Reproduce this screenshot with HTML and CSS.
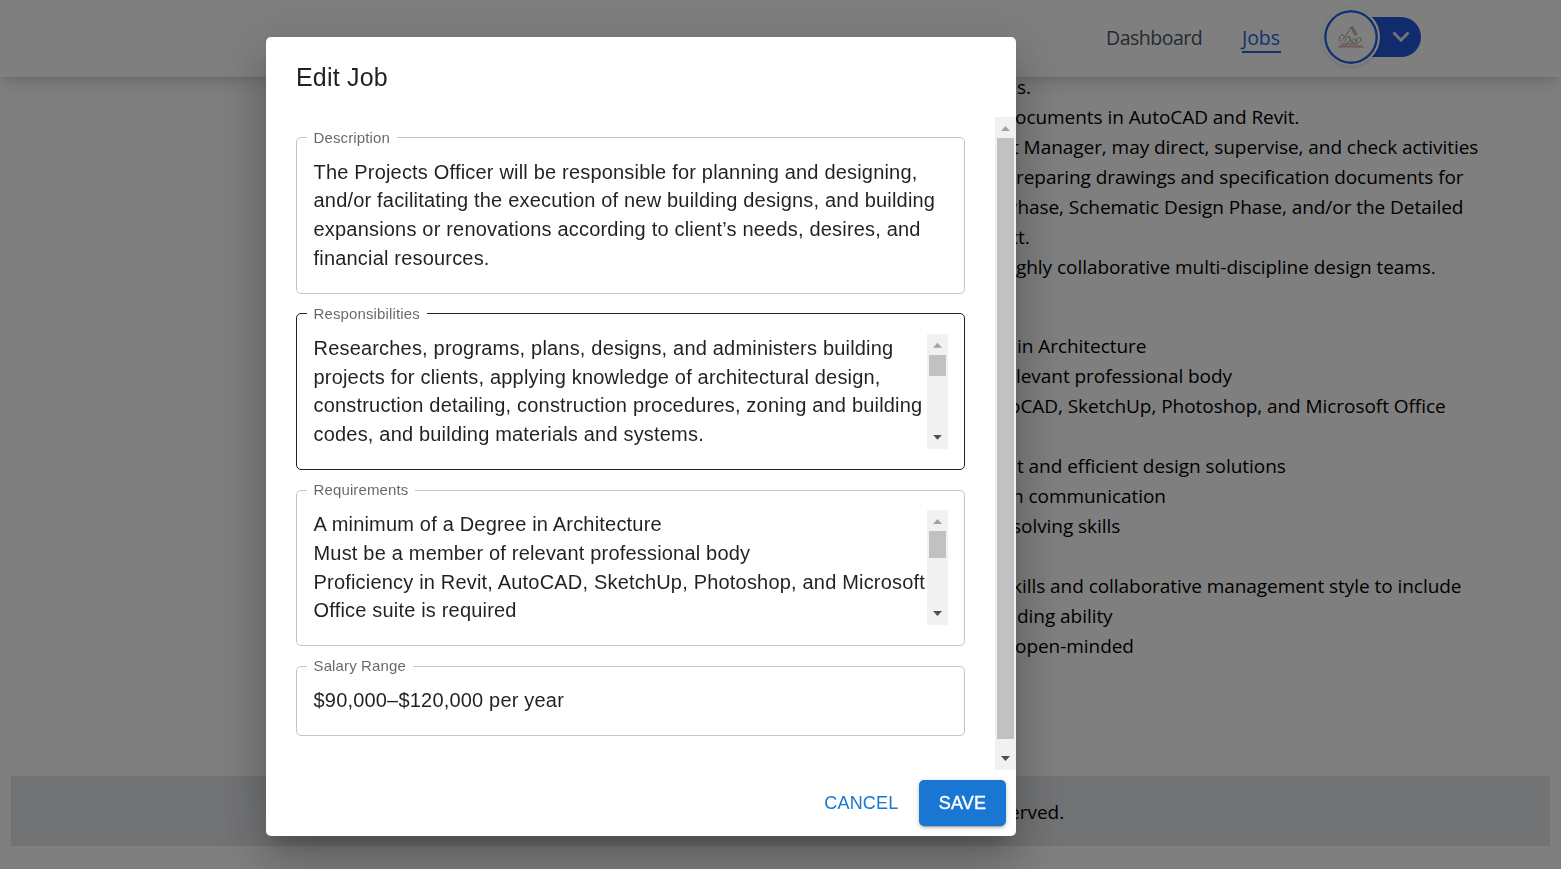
FILE: index.html
```html
<!DOCTYPE html>
<html lang="en">
<head>
<meta charset="utf-8">
<title>Edit Job</title>
<link rel="stylesheet" href="styles.css">
</head>
<body>
<div class="page">
  <header class="topbar">
    <nav class="nav">
      <a class="nav-link">Dashboard</a>
      <a class="nav-link active">Jobs</a>
    </nav>
    <div class="account">
      <div class="avatar">
        <svg width="28" height="26" viewBox="0 0 28 26" fill="none">
          <path d="M14 3L16 2L21 11L18.500 11ZM2 21.500H24.500L21 18.500L27 23.500H1Z" fill="#f0a3a3"/>
          <path d="M3 18c-2-3 0-8 3-7s0 5-2 6M8 13l6-10 4 9M8 18c0-4 4-7 5-4s-3 5-4 7M12 12l3 7M15 18c0-4 4-3 4-1s-3 3-4 1M19 17c1-5 6-4 5-1s-4 3-5 1M4 20h17" stroke="#999" stroke-width=".9"/>
        </svg>
      </div>
      <div class="pill">
        <svg width="18" height="12" viewBox="0 0 18 12" fill="none"><path d="M1.500 1.500L9 9.200L16.500 1.500" stroke="#e5e7eb" stroke-width="3"/></svg>
      </div>
    </div>
  </header>
  <main class="content">
    <div class="lines">
      <p>s.</p>
      <p class="in2">ocuments in AutoCAD and Revit.</p>
      <p class="in4">t Manager, may direct, supervise, and check activities</p>
      <p class="in1">reparing drawings and specification documents for</p>
      <p class="in12">Phase, Schematic Design Phase, and/or the Detailed</p>
      <p class="in8">ct.</p>
      <p class="in1">ghly collaborative multi-discipline design teams.</p>
    </div>
    <div class="lines second">
      <p>in Architecture</p>
      <p class="in1">levant professional body</p>
      <p class="in8">oCAD, SketchUp, Photoshop, and Microsoft Office</p>
      <p></p>
      <p>t and efficient design solutions</p>
      <p class="in4">n communication</p>
      <p class="in4">solving skills</p>
      <p></p>
      <p class="in4">kills and collaborative management style to include</p>
      <p>ding ability</p>
      <p class="in2">open-minded</p>
    </div>
  </main>
  <footer class="footer">erved.</footer>
</div>

<div class="backdrop">
  <section class="dialog">
    <h2 class="title">Edit Job</h2>
    <div class="body">
      <div class="fields">
        <fieldset class="field"><legend>Description</legend>
          <div class="text">The Projects Officer will be responsible for planning and designing,<br>and/or facilitating the execution of new building designs, and building<br>expansions or renovations according to client’s needs, desires, and<br>financial resources.</div>
        </fieldset>
        <fieldset class="field hover"><legend>Responsibilities</legend>
          <div class="text">Researches, programs, plans, designs, and administers building<br>projects for clients, applying knowledge of architectural design,<br>construction detailing, construction procedures, zoning and building<br>codes, and building materials and systems.</div>
          <div class="scroll"><i class="up"></i><b class="thumb"></b><i class="down"></i></div>
        </fieldset>
        <fieldset class="field"><legend>Requirements</legend>
          <div class="text">A minimum of a Degree in Architecture<br>Must be a member of relevant professional body<br>Proficiency in Revit, AutoCAD, SketchUp, Photoshop, and Microsoft<br>Office suite is required</div>
          <div class="scroll"><i class="up"></i><b class="thumb tall"></b><i class="down"></i></div>
        </fieldset>
        <fieldset class="field single"><legend>Salary Range</legend>
          <div class="text">$90,000–$120,000 per year</div>
        </fieldset>
      </div>
      <div class="scroll main"><i class="up"></i><b class="thumb"></b><i class="down"></i></div>
    </div>
    <div class="actions">
      <button class="btn">CANCEL</button>
      <button class="btn save">SAVE</button>
    </div>
  </section>
</div>
</body>
</html>
```
FILE: styles.css
```css
* { box-sizing: border-box; }
body { margin: 0; background: #fff; font-family: "Open Sans", "Noto Sans", sans-serif; }
p, h2 { margin: 0; font-weight: 400; }
.page { height: 869px; overflow: hidden; display: flex; flex-direction: column; }

.topbar {
  position: relative; z-index: 1; flex: none; height: 77px; background: #fff;
  display: flex; align-items: flex-start; justify-content: flex-end; padding: 8px 140px 0 0;
  box-shadow: 0 12px 19px -4px rgba(0,0,0,.1), 0 5px 7px -2px rgba(0,0,0,.08);
}
.nav { display: flex; gap: 40px; margin: 16px 41px 0 0; }
.nav-link { font-size: 19.5px; line-height: 27px; height: 29px; color: #4b5563; letter-spacing: -.5px; width: 96px; white-space: nowrap; }
.nav-link.active { color: #2563eb; border-bottom: 2px solid #2563eb; letter-spacing: -.05px; width: 39px; }
.account { display: flex; align-items: center; }
.avatar {
  position: relative; z-index: 1; width: 58px; height: 58px; border-radius: 50%;
  border: 2px solid #fff; background: #fff; display: flex; align-items: center; justify-content: center;
  box-shadow: inset 0 0 0 2.5px #2563eb, 0 1px 4px rgba(0,0,0,.15);
}
.pill {
  width: 70px; height: 40px; margin-left: -29px; border-radius: 0 20px 20px 0; background: #2158dc;
  display: flex; align-items: center; justify-content: flex-end; padding-right: 11px;
}

.content { height: 699px; flex: none; padding-left: 1017px; }
.lines { margin-top: -5px; font-size: 19px; line-height: 30px; color: #000; white-space: nowrap; letter-spacing: -.05px; }
.lines.second { margin-top: 49px; }
.lines p { height: 30px; }
.in1 { margin-left: -1px; }
.in2 { margin-left: -2px; }
.in4 { margin-left: -5px; }
.in8 { margin-left: -8px; }
.in12 { margin-left: -11px; }
.footer {
  margin: 0 11px; height: 70px; flex: none; padding: 1px 0 0 998px; background: #e5e7eb;
  font-size: 19px; line-height: 70px; color: #000;
}

.backdrop { position: fixed; z-index: 10; inset: 0; background: rgba(0,0,0,.5); padding: 37px 0 0 266px; font-family: "Liberation Sans", Arial, sans-serif; }
.dialog {
  width: 750px; height: 799px; background: #fff; border-radius: 5px; display: flex; flex-direction: column;
  color: rgba(0,0,0,.87);
  box-shadow: 0 14px 19px -9px rgba(0,0,0,.2), 0 30px 48px 4px rgba(0,0,0,.14), 0 11px 58px 10px rgba(0,0,0,.12);
}
.title { height: 80px; padding: 20px 30px; font-size: 25px; line-height: 40px; letter-spacing: .19px; }
.body { height: 653px; display: flex; justify-content: space-between; }
.fields { width: 699px; padding: 11.5px 0 0 30px; display: flex; flex-direction: column; gap: 11.1px; }
.field {
  margin: 0; width: 669px; height: 165.2px; padding: 11px 16px 0 16.5px; border: 1px solid #c4c4c4; border-radius: 5px;
  display: flex; justify-content: space-between; min-width: 0;
}
.field.hover { border-color: #212121; }
.field.single { height: 79px; }
.field legend {
  margin-left: -6.5px; padding: 0 7px 0 6.5px; height: 18px; line-height: 18px;
  font-size: 15px; letter-spacing: .13px; color: rgba(0,0,0,.6);
}
.text { font-size: 20px; line-height: 28.75px; letter-spacing: .19px; white-space: nowrap; }
.scroll {
  width: 21px; height: 115px; flex: none; background: #f1f1f1;
  display: flex; flex-direction: column; align-items: center;
}
.up, .down { flex: none; height: 21px; width: 21px; display: flex; align-items: center; justify-content: center; }
.up::before, .down::before { content: ""; width: 9px; height: 5px; }
.up::before { background: #a3a3a3; clip-path: polygon(50% 0, 100% 100%, 0 100%); margin-top: 2px; }
.down::before { background: #505050; clip-path: polygon(0 0, 100% 0, 50% 100%); margin-bottom: 2px; }
.down { margin-top: auto; }
.thumb { flex: none; width: 17px; height: 21px; background: #c1c1c1; }
.thumb.tall { height: 27px; }
.scroll.main { height: 653px; }
.scroll.main .thumb { height: 601px; }
.actions { flex: 1; display: flex; justify-content: flex-end; align-items: flex-start; gap: 10px; padding: 10px; }
.btn {
  height: 46px; padding: 0 10.5px; border: 0; border-radius: 5px; background: none; color: #1976d2;
  font: 18px "Liberation Sans", Arial, sans-serif; letter-spacing: .2px;
}
.save {
  width: 87px; background: #1976d2; color: #fff; -webkit-text-stroke: .4px #fff;
  box-shadow: 0 4px 1px -3px rgba(0,0,0,.2), 0 2px 3px rgba(0,0,0,.14), 0 1px 6px rgba(0,0,0,.12);
}
```
